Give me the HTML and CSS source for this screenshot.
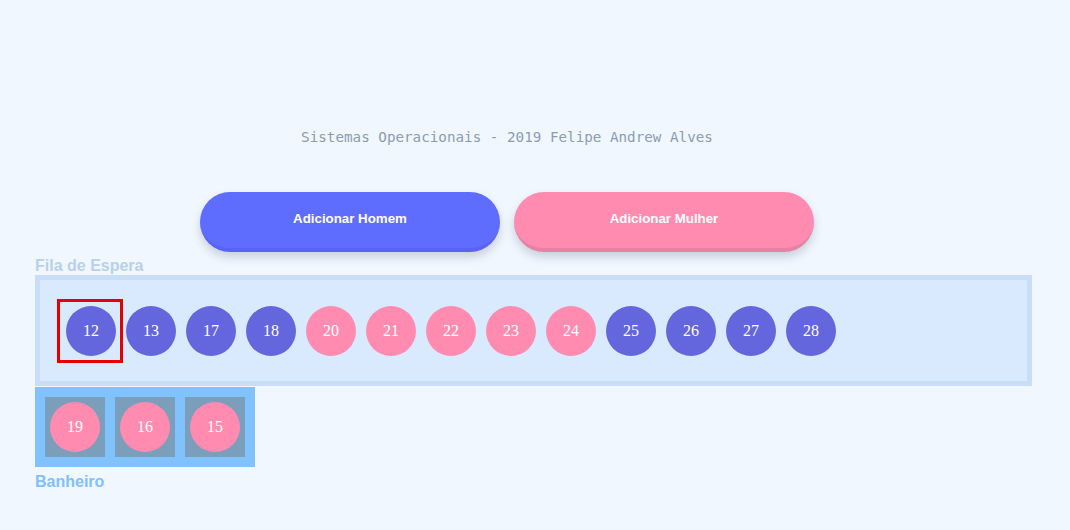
FILE: index.html
```html
<!DOCTYPE html>
<html>
<head>
<meta charset="utf-8">
<link rel="stylesheet" href="styles.css">
</head>
<body>
<div class="top">
  <p class="title">Sistemas Operacionais - 2019 Felipe Andrew Alves</p>
  <div class="actions">
    <button class="btn btn-man">Adicionar Homem</button>
    <button class="btn btn-woman">Adicionar Mulher</button>
  </div>
</div>
<div class="label label-queue">Fila de Espera</div>
<div class="queue">
  <div class="current"><div class="person man">12</div></div>
  <div class="person man">13</div>
  <div class="person man">17</div>
  <div class="person man">18</div>
  <div class="person woman">20</div>
  <div class="person woman">21</div>
  <div class="person woman">22</div>
  <div class="person woman">23</div>
  <div class="person woman">24</div>
  <div class="person man">25</div>
  <div class="person man">26</div>
  <div class="person man">27</div>
  <div class="person man">28</div>
</div>
<div class="bathroom">
  <div class="stall"><div class="person woman">19</div></div>
  <div class="stall"><div class="person woman">16</div></div>
  <div class="stall"><div class="person woman">15</div></div>
</div>
<div class="label label-bath">Banheiro</div>
</body>
</html>
```

FILE: styles.css
```css
html, body {
  margin: 0;
  padding: 0;
  background: #f0f7ff;
}
body {
  width: 1070px;
  height: 530px;
  overflow: hidden;
}
.top {
  margin-right: 56px;
  padding-top: 127px;
  display: flex;
  flex-direction: column;
  align-items: center;
}
.title {
  margin: 0;
  font-family: "DejaVu Sans Mono", "Liberation Mono", monospace;
  font-size: 14.25px;
  line-height: 20px;
  color: #8d9cb0;
}
.actions {
  margin-top: 45px;
  display: flex;
  gap: 14px;
}
.btn {
  width: 300px;
  height: 60px;
  border: none;
  border-radius: 30px;
  font-family: "Liberation Sans", Arial, sans-serif;
  font-weight: bold;
  font-size: 13.3px;
  color: #fff;
  padding: 0 0 4px 0;
  cursor: pointer;
  box-shadow: 0 5px 10px rgba(60, 70, 90, 0.22);
}
.btn-man {
  background: #5f6dff;
  border-bottom: 4px solid #5a62f4;
}
.btn-woman {
  background: #ff8bb0;
  border-bottom: 4px solid #e782a3;
}
.label {
  margin-left: 35px;
  font-family: "Liberation Sans", Arial, sans-serif;
  font-weight: bold;
  font-size: 16px;
  line-height: 18px;
}
.label-queue {
  margin-top: 5px;
  color: #b7d1eb;
}
.label-bath {
  margin-top: 6px;
  color: #80c1fd;
}
.queue {
  margin-left: 35px;
  width: 961px;
  height: 101px;
  border: 5px solid #c9def6;
  background: #d9eafe;
  display: flex;
  align-items: center;
  gap: 10px;
  padding-left: 26px;
}
.person {
  width: 50px;
  height: 50px;
  border-radius: 50%;
  flex: none;
  display: flex;
  align-items: center;
  justify-content: center;
  font-family: "Liberation Serif", "Times New Roman", serif;
  font-size: 16px;
  color: #fff;
}
.man {
  background: #6366dc;
}
.woman {
  background: #ff8bb0;
}
.current {
  flex: none;
  border: 3px solid #e80000;
  padding: 4px 4px 4px 6px;
  margin: 0 -7px 0 -9px;
}
.bathroom {
  margin-left: 35px;
  margin-top: 1px;
  width: 200px;
  padding: 10px;
  background: #7fc2fd;
  display: flex;
  gap: 10px;
}
.stall {
  width: 60px;
  height: 60px;
  background: #7b9fbb;
  display: flex;
  align-items: center;
  justify-content: center;
}
```
